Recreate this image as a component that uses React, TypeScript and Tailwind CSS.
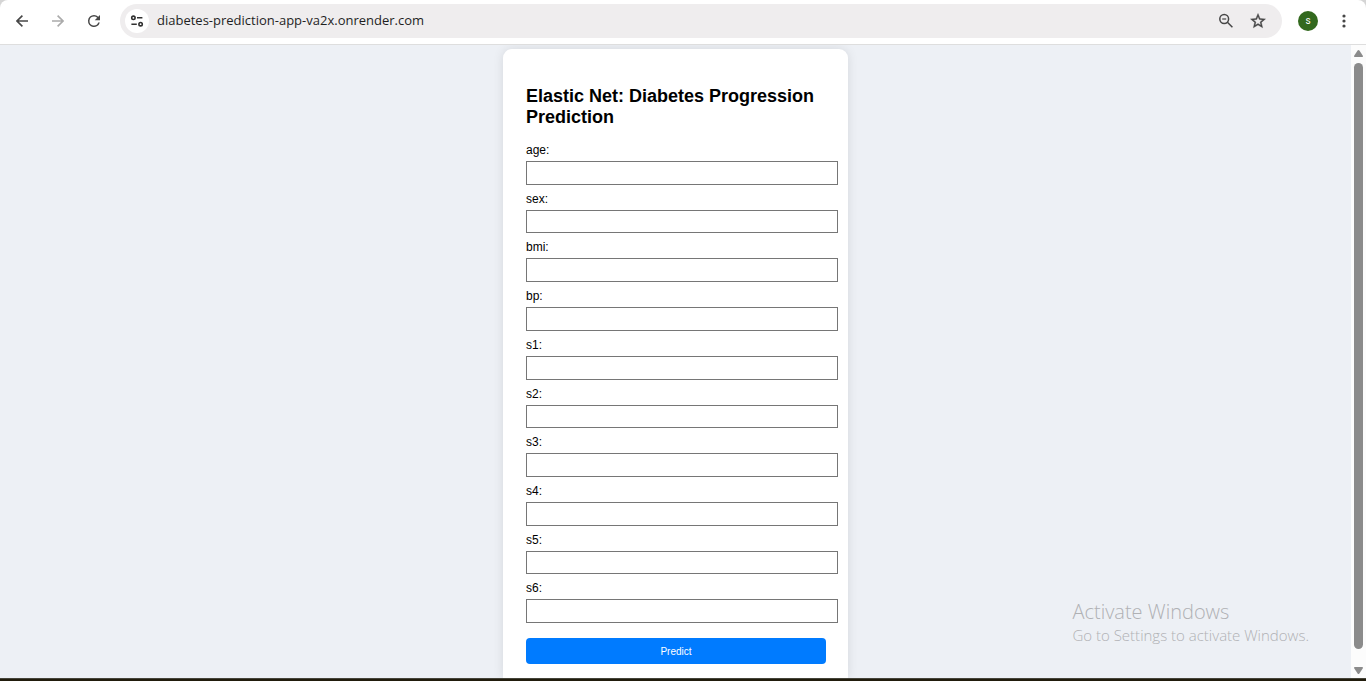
const fields = ["age", "sex", "bmi", "bp", "s1", "s2", "s3", "s4", "s5", "s6"];

const iconButton = "flex size-6 shrink-0 items-center justify-center rounded-full";

function BrowserBar() {
  return (
    <header className="shrink-0 bg-[#d5d5d5]">
      <div className="flex items-center rounded-t-lg border-b border-[#dedede] bg-white pt-1 pr-[10px] pb-[6px] pl-[10px]">
        <nav className="flex items-center gap-3" aria-label="Navigation">
          <button type="button" aria-label="Back" className={iconButton}>
            <svg viewBox="0 0 12 12" className="size-3" fill="none" stroke="#474747" strokeWidth="1.6">
              <path d="M12 6H1.2M6.4 .6 1 6l5.4 5.4" />
            </svg>
          </button>
          <button type="button" aria-label="Forward" className={iconButton}>
            <svg viewBox="0 0 12 12" className="size-3" fill="none" stroke="#ababab" strokeWidth="1.6">
              <path d="M0 6h10.8M5.6 .6 11 6l-5.4 5.4" />
            </svg>
          </button>
          <button type="button" aria-label="Reload" className={iconButton}>
            <svg viewBox="0 0 24 24" className="size-[18px]" fill="#474747">
              <path d="M17.65 6.35A7.96 7.96 0 0 0 12 4a8 8 0 1 0 7.73 10h-2.08A6 6 0 1 1 12 6c1.66 0 3.14.69 4.22 1.78L13 11h7V4z" />
            </svg>
          </button>
        </nav>

        <div className="ml-[14px] flex h-[34px] flex-1 items-center rounded-full bg-[#efedee] pr-3 pl-[5px]">
          <button
            type="button"
            aria-label="View site information"
            className="flex size-6 shrink-0 items-center justify-center rounded-full bg-white"
          >
            <svg viewBox="0 0 14 12" className="h-3 w-[14px]" fill="none" stroke="#303030" strokeWidth="1.6">
              <circle cx="3.4" cy="2.8" r="1.7" />
              <path d="M7 2.8h5.4M1.4 9.2h5.4" />
              <circle cx="10.6" cy="9.2" r="1.7" />
            </svg>
          </button>
          <input
            type="text"
            aria-label="Address"
            defaultValue="diabetes-prediction-app-va2x.onrender.com"
            className="ml-2 min-w-0 flex-1 bg-transparent font-['Open_Sans',sans-serif] text-[13px] text-[#1f1f1f] outline-none"
          />
          <div className="flex items-center gap-2">
            <button type="button" aria-label="Zoom" className={iconButton}>
              <svg viewBox="0 0 16 16" className="size-4" fill="none" stroke="#474747" strokeWidth="1.5">
                <circle cx="6.2" cy="6" r="4.4" />
                <path d="m9.4 9.2 5 5" />
                <path d="M4.2 6h4" strokeWidth="1.2" />
              </svg>
            </button>
            <button type="button" aria-label="Bookmark this tab" className={iconButton}>
              <svg viewBox="0 0 24 24" className="size-[18px]" fill="#474747" stroke="#474747" strokeWidth="0.5">
                <path d="m22 9.24-7.19-.62L12 2 9.19 8.63 2 9.24l5.46 4.73L5.82 21 12 17.27 18.18 21l-1.63-7.03zM12 15.4l-3.76 2.27 1-4.28-3.32-2.88 4.38-.38L12 6.1l1.71 4.04 4.38.38-3.32 2.88 1 4.28z" />
              </svg>
            </button>
          </div>
        </div>

        <button
          type="button"
          aria-label="Profile"
          className="ml-4 flex size-5 items-center justify-center rounded-full bg-[#33691e] font-[Roboto,sans-serif] text-[10px] leading-none text-white"
        >
          s
        </button>
        <button type="button" aria-label="Menu" className={`${iconButton} ml-[14px]`}>
          <svg viewBox="0 0 4 14" className="h-[14px] w-1" fill="#474747">
            <circle cx="2" cy="2" r="1.6" />
            <circle cx="2" cy="7" r="1.6" />
            <circle cx="2" cy="12" r="1.6" />
          </svg>
        </button>
      </div>
    </header>
  );
}

function PredictionCard() {
  return (
    <main className="flex w-[345px] flex-col rounded-t-[9px] bg-white pt-[37px] pr-[22px] pb-[14px] pl-[23px] shadow-[0_0_11px_rgba(0,0,0,0.1)]">
      <h1 className="text-lg leading-[21px] font-bold">Elastic Net: Diabetes Progression Prediction</h1>
      <form className="mt-[15px] flex flex-1 flex-col" onSubmit={(e) => e.preventDefault()}>
        <div className="flex flex-1 flex-col gap-[7px]">
          {fields.map((name) => (
            <div key={name} className="flex flex-1 flex-col gap-1">
              <label htmlFor={name} className="text-xs leading-[14px]">
                {name}:
              </label>
              <input
                id={name}
                name={name}
                type="text"
                className="min-h-5 w-[312px] flex-1 border border-[#767676] bg-white px-2 text-xs"
              />
            </div>
          ))}
        </div>
        <button
          type="submit"
          className="mt-[15px] h-[26px] rounded bg-[#007bff] text-[10px] text-white"
        >
          Predict
        </button>
      </form>
    </main>
  );
}

function Scrollbar() {
  return (
    <div className="flex w-[15px] shrink-0 flex-col items-center bg-[#fcfcfc] pt-[5px] pb-1" aria-hidden="true">
      <svg viewBox="0 0 9 8" className="h-2 w-[9px]" fill="#8b8b8b">
        <path d="M4.5 0Q5 0 5.4.5L9 6q.2 1-.8 1H.8Q-.2 7 0 6L3.6.5Q4 0 4.5 0z" />
      </svg>
      <div className="mt-[5px] mb-[17px] w-[9px] flex-1 rounded-full bg-[#8b8b8b]" />
      <svg viewBox="0 0 9 8" className="h-2 w-[9px]" fill="#8b8b8b">
        <path d="M4.5 8Q5 8 5.4 7.5L9 2q.2-1-.8-1H.8Q-.2 1 0 2l3.6 5.5Q4 8 4.5 8z" />
      </svg>
    </div>
  );
}

export default function App() {
  return (
    <div className="relative flex h-screen min-h-[560px] flex-col overflow-hidden font-['Liberation_Sans',Arial,sans-serif] text-black">
      <BrowserBar />
      <div className="flex flex-1">
        <div className="flex flex-1 justify-center overflow-hidden bg-[#edf0f5] pt-1">
          <PredictionCard />
        </div>
        <Scrollbar />
      </div>
      <div className="h-[3px] shrink-0 border-t border-[#45443a] bg-[#211c0c]" />
      <aside className="pointer-events-none absolute right-[57px] bottom-[35px] font-['Open_Sans',sans-serif] font-light text-[#b0b1b4]">
        <p className="text-xl leading-6">Activate Windows</p>
        <p className="text-[15px] leading-[22px]">Go to Settings to activate Windows.</p>
      </aside>
    </div>
  );
}
